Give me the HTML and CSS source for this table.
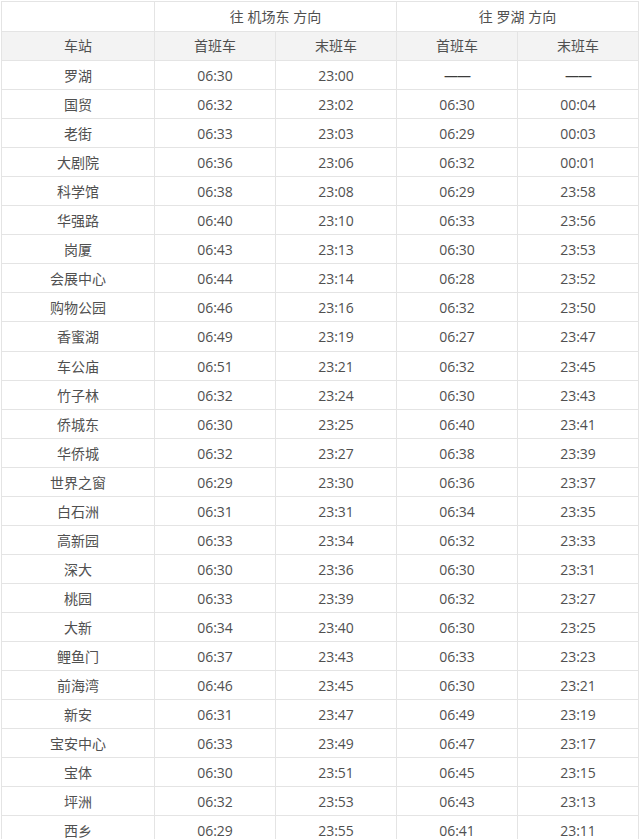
FILE: index.html
```html
<!DOCTYPE html>
<html lang="zh">
<head>
<meta charset="utf-8">
<title>时刻表</title>
<link rel="stylesheet" href="styles.css">
</head>
<body>
<table class="timetable">
  <colgroup>
    <col class="c-station"><col class="c-time"><col class="c-time"><col class="c-time"><col class="c-time">
  </colgroup>
  <thead>
    <tr class="dir-row">
      <th></th>
      <th colspan="2">往 机场东 方向</th>
      <th colspan="2">往 罗湖 方向</th>
    </tr>
    <tr class="head-row">
      <th>车站</th><th>首班车</th><th>末班车</th><th>首班车</th><th>末班车</th>
    </tr>
  </thead>
  <tbody>
    <tr><td>罗湖</td><td>06:30</td><td>23:00</td><td class="dash">——</td><td class="dash">——</td></tr>
    <tr><td>国贸</td><td>06:32</td><td>23:02</td><td>06:30</td><td>00:04</td></tr>
    <tr><td>老街</td><td>06:33</td><td>23:03</td><td>06:29</td><td>00:03</td></tr>
    <tr><td>大剧院</td><td>06:36</td><td>23:06</td><td>06:32</td><td>00:01</td></tr>
    <tr><td>科学馆</td><td>06:38</td><td>23:08</td><td>06:29</td><td>23:58</td></tr>
    <tr><td>华强路</td><td>06:40</td><td>23:10</td><td>06:33</td><td>23:56</td></tr>
    <tr><td>岗厦</td><td>06:43</td><td>23:13</td><td>06:30</td><td>23:53</td></tr>
    <tr><td>会展中心</td><td>06:44</td><td>23:14</td><td>06:28</td><td>23:52</td></tr>
    <tr><td>购物公园</td><td>06:46</td><td>23:16</td><td>06:32</td><td>23:50</td></tr>
    <tr><td>香蜜湖</td><td>06:49</td><td>23:19</td><td>06:27</td><td>23:47</td></tr>
    <tr><td>车公庙</td><td>06:51</td><td>23:21</td><td>06:32</td><td>23:45</td></tr>
    <tr><td>竹子林</td><td>06:32</td><td>23:24</td><td>06:30</td><td>23:43</td></tr>
    <tr><td>侨城东</td><td>06:30</td><td>23:25</td><td>06:40</td><td>23:41</td></tr>
    <tr><td>华侨城</td><td>06:32</td><td>23:27</td><td>06:38</td><td>23:39</td></tr>
    <tr><td>世界之窗</td><td>06:29</td><td>23:30</td><td>06:36</td><td>23:37</td></tr>
    <tr><td>白石洲</td><td>06:31</td><td>23:31</td><td>06:34</td><td>23:35</td></tr>
    <tr><td>高新园</td><td>06:33</td><td>23:34</td><td>06:32</td><td>23:33</td></tr>
    <tr><td>深大</td><td>06:30</td><td>23:36</td><td>06:30</td><td>23:31</td></tr>
    <tr><td>桃园</td><td>06:33</td><td>23:39</td><td>06:32</td><td>23:27</td></tr>
    <tr><td>大新</td><td>06:34</td><td>23:40</td><td>06:30</td><td>23:25</td></tr>
    <tr><td>鲤鱼门</td><td>06:37</td><td>23:43</td><td>06:33</td><td>23:23</td></tr>
    <tr><td>前海湾</td><td>06:46</td><td>23:45</td><td>06:30</td><td>23:21</td></tr>
    <tr><td>新安</td><td>06:31</td><td>23:47</td><td>06:49</td><td>23:19</td></tr>
    <tr><td>宝安中心</td><td>06:33</td><td>23:49</td><td>06:47</td><td>23:17</td></tr>
    <tr><td>宝体</td><td>06:30</td><td>23:51</td><td>06:45</td><td>23:15</td></tr>
    <tr><td>坪洲</td><td>06:32</td><td>23:53</td><td>06:43</td><td>23:13</td></tr>
    <tr><td>西乡</td><td>06:29</td><td>23:55</td><td>06:41</td><td>23:11</td></tr>
  </tbody>
</table>
</body>
</html>
```

FILE: styles.css
```css
html, body {
  margin: 0;
  padding: 0;
  background: #ffffff;
}
body {
  padding: 1px 0 0 1px;
  font-family: "Open Sans", "Noto Sans CJK SC", sans-serif;
  font-size: 14px;
  color: #505050;
}
.timetable {
  border-collapse: collapse;
  table-layout: fixed;
  width: 637px;
}
.c-station { width: 153px; }
.c-time { width: 121px; }
.timetable th,
.timetable td {
  border: 1px solid #e4e4e4;
  padding: 0;
  height: 28.05px;
  text-align: center;
  vertical-align: middle;
  font-weight: normal;
  line-height: 20px;
}
.timetable td {
  padding-top: 2px;
  height: 26.05px;
}
.dir-row th {
  height: 29px;
  background: #ffffff;
}
.head-row th {
  background: #f3f3f3;
}
.timetable td.dash {
  color: #3c3c3c;
  letter-spacing: -1px;
}
```
